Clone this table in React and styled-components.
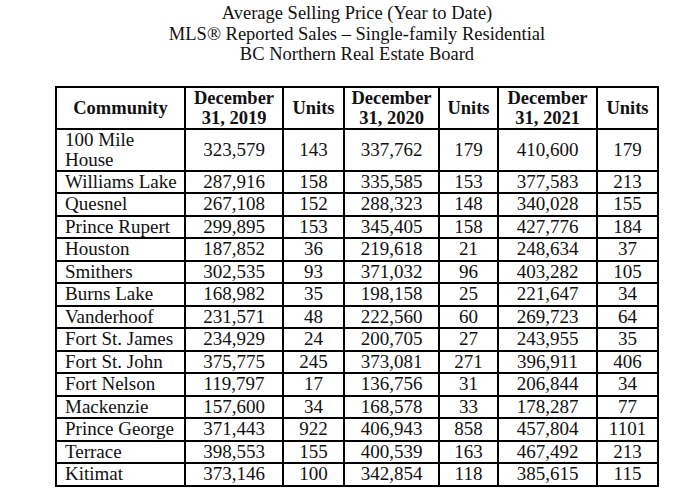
import React from "react";
import styled, { createGlobalStyle } from "styled-components";

const Global = createGlobalStyle`
  html, body { margin: 0; padding: 0; background: #fff; }
  body { font-family: "Liberation Serif", "Times New Roman", serif; color: #111; }
`;

const Page = styled.div`
  width: 696px;
  height: 501px;
  overflow: hidden;
  padding: 3px 0 0 56px;
  box-sizing: border-box;
`;

const Block = styled.div`
  width: 602px;
  display: flex;
  flex-direction: column;
  align-items: center;
`;

const Title = styled.h1`
  margin: 0 0 21px;
  font-size: 18.5px;
  font-weight: normal;
  line-height: 20.5px;
  text-align: center;
`;

const Table = styled.table`
  border-collapse: collapse;
  width: 602px;
  table-layout: fixed;
  font-size: 19px;
`;

const Th = styled.th`
  border: 2px solid #000;
  font-size: 18.5px;
  font-weight: bold;
  line-height: 20px;
  padding: 0;
  text-align: center;
  height: 40px;
`;

const Row = styled.tr`
  height: ${(p) => (p.$tall ? "42px" : "22.5px")};
`;

const Td = styled.td`
  border: 2px solid #000;
  padding: 0 0 0 ${(p) => (p.$left ? "8px" : "0")};
  text-align: ${(p) => (p.$left ? "left" : "center")};
  line-height: 20px;
  white-space: ${(p) => (p.$left ? "normal" : "nowrap")};
`;

const widths = [129, 98, 61, 95, 59, 99, 61];

const rows = [
  ["100 Mile House", "323,579", "143", "337,762", "179", "410,600", "179"],
  ["Williams Lake", "287,916", "158", "335,585", "153", "377,583", "213"],
  ["Quesnel", "267,108", "152", "288,323", "148", "340,028", "155"],
  ["Prince Rupert", "299,895", "153", "345,405", "158", "427,776", "184"],
  ["Houston", "187,852", "36", "219,618", "21", "248,634", "37"],
  ["Smithers", "302,535", "93", "371,032", "96", "403,282", "105"],
  ["Burns Lake", "168,982", "35", "198,158", "25", "221,647", "34"],
  ["Vanderhoof", "231,571", "48", "222,560", "60", "269,723", "64"],
  ["Fort St. James", "234,929", "24", "200,705", "27", "243,955", "35"],
  ["Fort St. John", "375,775", "245", "373,081", "271", "396,911", "406"],
  ["Fort Nelson", "119,797", "17", "136,756", "31", "206,844", "34"],
  ["Mackenzie", "157,600", "34", "168,578", "33", "178,287", "77"],
  ["Prince George", "371,443", "922", "406,943", "858", "457,804", "1101"],
  ["Terrace", "398,553", "155", "400,539", "163", "467,492", "213"],
  ["Kitimat", "373,146", "100", "342,854", "118", "385,615", "115"],
];

export default function App() {
  return (
    <Page>
      <Global />
      <Block>
        <Title>
          Average Selling Price (Year to Date)
          <br />
          MLS® Reported Sales – Single-family Residential
          <br />
          BC Northern Real Estate Board
        </Title>
        <Table>
          <colgroup>
            {widths.map((w, i) => (
              <col key={i} style={{ width: w }} />
            ))}
          </colgroup>
          <thead>
            <tr>
              <Th>Community</Th>
              <Th>December<br />31, 2019</Th>
              <Th>Units</Th>
              <Th>December<br />31, 2020</Th>
              <Th>Units</Th>
              <Th>December<br />31, 2021</Th>
              <Th>Units</Th>
            </tr>
          </thead>
          <tbody>
            {rows.map((r, i) => (
              <Row key={r[0]} $tall={i === 0}>
                {r.map((c, j) => (
                  <Td key={j} $left={j === 0}>
                    {c}
                  </Td>
                ))}
              </Row>
            ))}
          </tbody>
        </Table>
      </Block>
    </Page>
  );
}
